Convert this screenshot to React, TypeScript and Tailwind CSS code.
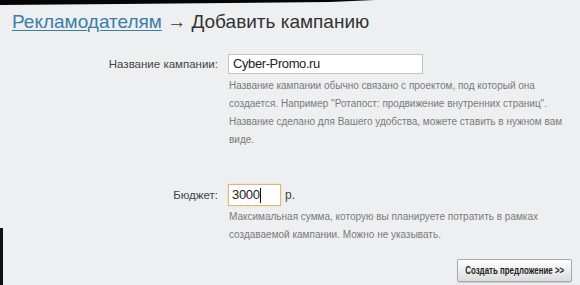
import React from 'react'

const hint = 'text-[10px] leading-[18px] text-[#7a7a7a] whitespace-nowrap'

export default function App() {
  return (
    <div className="relative w-[580px] h-[285px] overflow-hidden bg-[#eeeff1]" style={{ fontFamily: '"Liberation Sans", Arial, sans-serif' }}>
      {/* photo edge */}
      <svg className="absolute left-0 top-0" width="580" height="8" viewBox="0 0 580 8">
        <polygon points="0,0 375,0 330,2 120,4 0,5" fill="#050505" />
      </svg>
      <div className="absolute left-0 top-[228px] w-[3px] h-[60px] bg-[#111]" />

      {/* header */}
      <h1 className="pl-[12px] pt-[11px] text-[19px] leading-[22px] text-[#333]">
        <a href="#" className="text-[#3a7ea6] underline decoration-1 underline-offset-2">Рекламодателям</a>
        <span> → Добавить кампанию</span>
      </h1>

      {/* campaign name */}
      <div className="flex mt-[21px]">
        <div className="w-[218px] shrink-0 text-right text-[11.5px] leading-[20px] text-[#444]">Название кампании:</div>
        <div className="ml-[10px] flex flex-col">
          <div className="w-[195px] h-[20px] border border-[#c4c4c4] bg-white px-[4px] text-[13px] leading-[18px] text-[#222]" style={{ letterSpacing: '-0.4px' }}>
            Cyber-Promo.ru
          </div>
          <div className="mt-[3px] pl-[1px]">
            <div className={hint}>Название кампании обычно связано с проектом, под который она</div>
            <div className={hint}>создается. Например "Ротапост: продвижение внутренних страниц".</div>
            <div className={hint}>Название сделано для Вашего удобства, можете ставить в нужном вам</div>
            <div className={hint}>виде.</div>
          </div>
        </div>
      </div>

      {/* budget */}
      <div className="flex mt-[35px]">
        <div className="w-[218px] shrink-0 text-right text-[11.5px] leading-[22px] text-[#444]">Бюджет:</div>
        <div className="ml-[10px] flex flex-col">
          <div className="flex items-center">
            <div className="flex items-center w-[53px] h-[22px] border border-[#dcb878] bg-white px-[3px] text-[13px] text-[#222] shadow-[0_0_2px_#f0d8a8]" style={{ letterSpacing: '-0.3px' }}>
              3000<span className="w-px h-[15px] bg-[#111]" />
            </div>
            <span className="ml-[4px] text-[12px] text-[#444]">р.</span>
          </div>
          <div className="mt-[2px] pl-[1px]">
            <div className={hint}>Максимальная сумма, которую вы планируете потратить в рамках</div>
            <div className={hint}>создаваемой кампании. Можно не указывать.</div>
          </div>
        </div>
      </div>

      {/* submit */}
      <div className="flex justify-end pr-[8px] mt-[15px]">
        <button className="flex items-center justify-center w-[115px] h-[23px] rounded-[2px] border border-[#a9a9a9] bg-gradient-to-b from-white to-[#dcdcdc] text-[#1e1e1e] whitespace-nowrap shadow-[0_1px_1px_rgba(0,0,0,0.15)]">
          <span className="inline-block text-[11px] font-bold scale-x-[0.72]">Создать предложение &gt;&gt;</span>
        </button>
      </div>
    </div>
  )
}
